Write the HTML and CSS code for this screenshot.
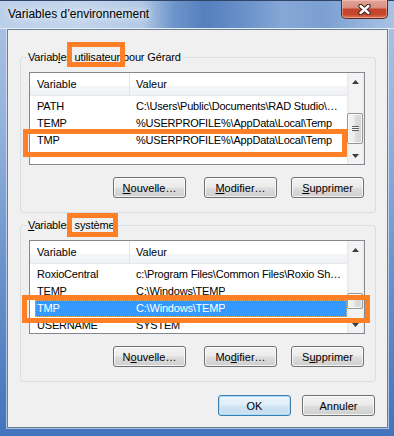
FILE: index.html
```html
<!DOCTYPE html>
<html lang="fr">
<head>
<meta charset="utf-8">
<title>Variables d’environnement</title>
<link rel="stylesheet" href="styles.css">
</head>
<body>
<div class="window">
  <div class="titlebar">
    <span class="title">Variables d’environnement</span>
    <div class="close">
      <svg width="13" height="11" viewBox="0 0 13 11"><path d="M2.5 2 L10.5 9 M10.5 2 L2.5 9" stroke="#3a2420" stroke-width="4.4" stroke-linecap="round"/><path d="M2.5 2 L10.5 9 M10.5 2 L2.5 9" stroke="#ffffff" stroke-width="2.4" stroke-linecap="round"/></svg>
    </div>
  </div>
  <div class="client">
    <fieldset class="group">
      <legend>Variab<u>l</u>es utilisateur pour Gérard</legend>
      <div class="list">
        <div class="list-main">
          <div class="lv-header"><div class="hc1">Variable</div><div class="hc2">Valeur</div></div>
          <div class="rows">
            <div class="row"><span class="c1">PATH</span><span class="c2">C:\Users\Public\Documents\RAD Studio\…</span></div>
            <div class="row"><span class="c1">TEMP</span><span class="c2">%USERPROFILE%\AppData\Local\Temp</span></div>
            <div class="row"><span class="c1">TMP</span><span class="c2">%USERPROFILE%\AppData\Local\Temp</span></div>
          </div>
        </div>
        <div class="vscroll">
          <div class="sb-btn"><svg width="7" height="4" viewBox="0 0 7 4"><polygon points="0,4 3.5,0 7,4" fill="#3d3d3d"/></svg></div>
          <div class="sb-track"><div class="thumb thumb-user"><span class="grip"></span></div></div>
          <div class="sb-btn"><svg width="7" height="4" viewBox="0 0 7 4"><polygon points="0,0 7,0 3.5,4" fill="#3d3d3d"/></svg></div>
        </div>
      </div>
      <div class="btn-row">
        <button class="btn btn-first"><u>N</u>ouvelle…</button>
        <button class="btn btn-mid"><u>M</u>odifier…</button>
        <button class="btn"><u>S</u>upprimer</button>
      </div>
    </fieldset>

    <fieldset class="group group-sys">
      <legend><u>V</u>ariables système</legend>
      <div class="list list-sys">
        <div class="list-main">
          <div class="lv-header"><div class="hc1">Variable</div><div class="hc2">Valeur</div></div>
          <div class="rows">
            <div class="row"><span class="c1">RoxioCentral</span><span class="c2">c:\Program Files\Common Files\Roxio Sh…</span></div>
            <div class="row"><span class="c1">TEMP</span><span class="c2">C:\Windows\TEMP</span></div>
            <div class="row selected"><span class="c1">TMP</span><span class="c2">C:\Windows\TEMP</span></div>
            <div class="row"><span class="c1">USERNAME</span><span class="c2">SYSTEM</span></div>
          </div>
        </div>
        <div class="vscroll">
          <div class="sb-btn"><svg width="7" height="4" viewBox="0 0 7 4"><polygon points="0,4 3.5,0 7,4" fill="#3d3d3d"/></svg></div>
          <div class="sb-track"><div class="thumb thumb-sys"></div></div>
          <div class="sb-btn"><svg width="7" height="4" viewBox="0 0 7 4"><polygon points="0,0 7,0 3.5,4" fill="#3d3d3d"/></svg></div>
        </div>
      </div>
      <div class="btn-row">
        <button class="btn btn-first">N<u>o</u>uvelle…</button>
        <button class="btn btn-mid">Mo<u>d</u>ifier…</button>
        <button class="btn">S<u>u</u>pprimer</button>
      </div>
    </fieldset>

    <div class="footer">
      <button class="btn btn-default">OK</button>
      <button class="btn">Annuler</button>
    </div>
  </div>

  <div class="mark mark-1"></div>
  <div class="mark mark-2"></div>
  <div class="mark mark-3"></div>
  <div class="mark mark-4"></div>
</div>
</body>
</html>
```

FILE: styles.css
```css
html, body {
  margin: 0;
  padding: 0;
}
body {
  font-family: "Liberation Sans", Arial, sans-serif;
  font-size: 11px;
  color: #000;
  background: #4a78bd;
}
.window {
  position: relative;
  width: 394px;
  height: 436px;
  box-sizing: border-box;
  padding: 0 6px 8px 7px;
  display: flex;
  flex-direction: column;
  overflow: hidden;
  background: linear-gradient(180deg, #adc4e3 0%, #93b1db 30%, #6690ca 65%, #4274bb 100%);
}
.titlebar {
  flex: none;
  height: 29px;
  margin: 0 -6px 0 -7px;
  display: flex;
  align-items: flex-start;
  background: linear-gradient(90deg, #bccfe9 0%, #c3d5ec 20%, #b3c9e6 36%, #6e95cb 44%, #557fbd 52%, #6a91c9 62%, #86a8d7 72%, #7b9fd1 82%, #94b3dc 92%, #a9c2e3 100%);
  box-shadow: inset 0 1px #2f4566, inset 0 -1px #dce7f4;
}
.title {
  padding-left: 8px;
  line-height: 28px;
  font-size: 12px;
  color: #000;
  text-shadow: 0 0 5px #e8f0fa, 0 0 8px #e8f0fa;
}
.close {
  margin-left: auto;
  margin-right: 6px;
  width: 47px;
  height: 19px;
  box-sizing: border-box;
  border: 1px solid #5a2a22;
  border-top: none;
  border-radius: 0 0 5px 5px;
  background: linear-gradient(180deg, #e2a597 0%, #d88e7f 42%, #c4432d 52%, #c7452d 80%, #df7a58 100%);
  box-shadow: inset 0 0 0 1px rgba(255, 210, 200, 0.45);
  display: flex;
  align-items: center;
  justify-content: center;
}
.client {
  flex: 1;
  box-sizing: border-box;
  border: 1px solid #6a7c94;
  box-shadow: 0 0 0 1px rgba(240, 246, 252, 0.6);
  background: #f0f0f0;
  padding: 20px 11px 0 12px;
  display: flex;
  flex-direction: column;
}
.group {
  margin: 0;
  min-width: 0;
  border: 1px solid #d5dfe5;
  border-radius: 3px;
  padding: 8px 10px 14px 8px;
}
.group-sys {
  margin-top: 5px;
}
.group legend {
  padding: 0 2px;
  margin-left: -3px;
  line-height: 14px;
  font-size: 11px;
  letter-spacing: -0.15px;
}
.list {
  display: flex;
  height: 93px;
  box-sizing: border-box;
  border: 1px solid #828790;
  background: #fff;
  overflow: hidden;
}
.list-sys {
  height: 94px;
}
.list-main {
  flex: 1;
  min-width: 0;
  overflow: hidden;
}
.lv-header {
  display: flex;
  height: 23px;
  box-sizing: border-box;
  border-bottom: 1px solid #e5e7ea;
  background: linear-gradient(180deg, #ffffff 0%, #ffffff 60%, #f5f6f7 60%, #f1f2f4 100%);
  line-height: 22px;
}
.hc1 {
  width: 100px;
  flex: none;
  box-sizing: border-box;
  padding-left: 7px;
  border-right: 1px solid #e2e5e9;
}
.hc2 {
  padding-left: 6px;
}
.rows {
  padding-top: 2px;
}
.row {
  display: flex;
  height: 17px;
  line-height: 17px;
  margin-left: 5px;
  white-space: nowrap;
  letter-spacing: -0.2px;
  box-sizing: border-box;
}
.c1 {
  width: 95px;
  flex: none;
  box-sizing: border-box;
  padding-left: 2px;
}
.c2 {
  padding-left: 6px;
  overflow: hidden;
}
.row.selected {
  background: #3399ff;
  color: #fff;
  outline: 1px dotted #e9b06a;
  outline-offset: -1px;
}
.vscroll {
  width: 17px;
  flex: none;
  display: flex;
  flex-direction: column;
  background: linear-gradient(90deg, #e4e4e4 0px, #f3f3f3 2px, #f3f3f3 15px, #e8e8e8 17px);
}
.sb-btn {
  height: 17px;
  flex: none;
  display: flex;
  align-items: center;
  justify-content: center;
}
.sb-track {
  flex: 1;
  display: flex;
  flex-direction: column;
}
.thumb {
  box-sizing: border-box;
  width: 16px;
  margin-left: 0;
  border: 1px solid #979797;
  border-radius: 2px;
  background: linear-gradient(90deg, #f4f4f4 0%, #ececec 45%, #dcdcdc 55%, #d6d6d6 100%);
  box-shadow: inset 0 0 0 1px rgba(255, 255, 255, 0.7);
  display: flex;
  align-items: center;
  justify-content: center;
}
.thumb-user {
  margin-top: 23px;
  height: 31px;
}
.thumb-sys {
  margin-top: 35px;
  height: 16px;
}
.grip {
  width: 7px;
  height: 5px;
  background: repeating-linear-gradient(180deg, #5f5f5f 0px, #5f5f5f 1px, #f4f4f4 1px, #f4f4f4 2px);
}
.btn-row {
  display: flex;
  justify-content: flex-end;
  margin-top: 12px;
  padding-right: 1px;
}
.btn {
  width: 73px;
  height: 21px;
  box-sizing: border-box;
  padding: 0;
  font-family: "Liberation Sans", Arial, sans-serif;
  font-size: 11px;
  color: #000;
  border: 1px solid #707070;
  border-radius: 3px;
  background: linear-gradient(180deg, #f2f2f2 0%, #ebebeb 48%, #dddddd 52%, #cfcfcf 100%);
  box-shadow: inset 0 0 0 1px rgba(255, 255, 255, 0.75);
}
.btn-first {
  margin-right: 18px;
}
.btn-mid {
  margin-right: 14px;
}
.footer {
  display: flex;
  justify-content: flex-end;
  gap: 11px;
  margin-top: 13px;
  padding-right: 1px;
}
.btn-default {
  border-color: #3c7fb1;
  background: linear-gradient(180deg, #eaf4fb 0%, #e1eef8 48%, #d1e5f3 52%, #c3dcef 100%);
  box-shadow: inset 0 0 0 1px #a8dbf5, inset 0 0 2px 1px rgba(255, 255, 255, 0.6);
}
.mark {
  position: absolute;
  box-sizing: border-box;
  border: 5px solid #ff7f27;
}
.mark-1 {
  left: 67px;
  top: 42px;
  width: 58px;
  height: 25px;
}
.mark-2 {
  left: 23px;
  top: 129px;
  width: 324px;
  height: 28px;
}
.mark-3 {
  left: 67px;
  top: 213px;
  width: 51px;
  height: 24px;
}
.mark-4 {
  left: 22px;
  top: 295px;
  width: 348px;
  height: 28px;
}
```
